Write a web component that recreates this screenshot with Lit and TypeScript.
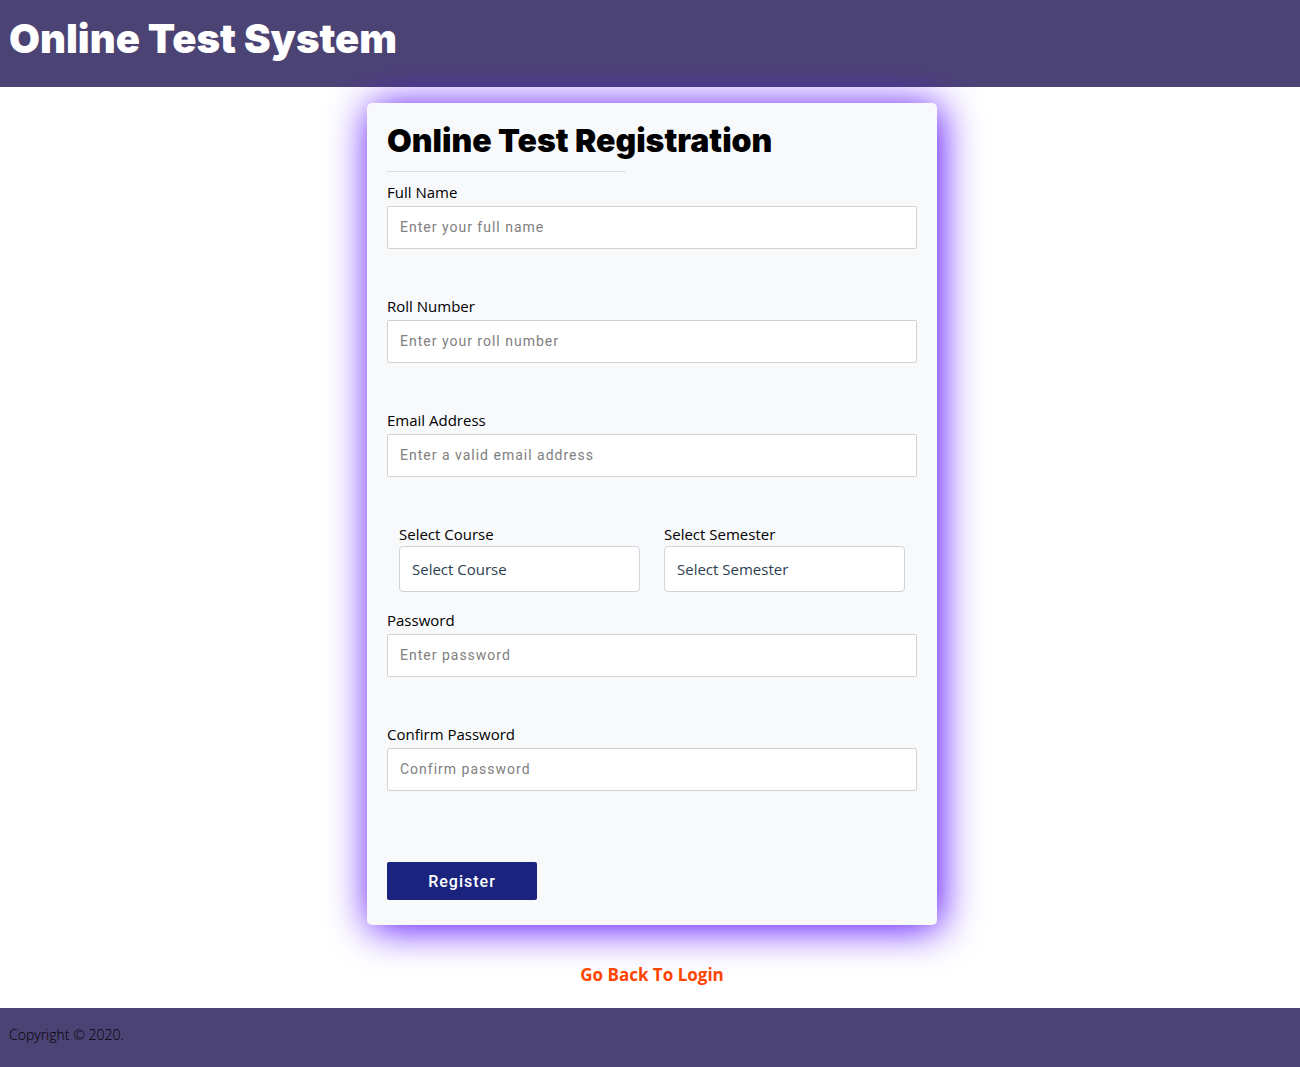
import { LitElement, html, css } from "lit";
import { customElement } from "lit/decorators.js";

interface Field {
  id: string;
  label: string;
  type: string;
  placeholder: string;
}

const identityFields: Field[] = [
  { id: "name", label: "Full Name", type: "text", placeholder: "Enter your full name" },
  { id: "roll", label: "Roll Number", type: "text", placeholder: "Enter your roll number" },
  { id: "email", label: "Email Address", type: "email", placeholder: "Enter a valid email address" },
];

const passwordFields: Field[] = [
  { id: "password", label: "Password", type: "password", placeholder: "Enter password" },
  { id: "confirm", label: "Confirm Password", type: "password", placeholder: "Confirm password" },
];

const choices = [
  { id: "course", label: "Select Course" },
  { id: "semester", label: "Select Semester" },
];

@customElement("app-root")
export class AppRoot extends LitElement {
  static styles = css`
    :host {
      display: flex;
      flex-direction: column;
      min-height: 100vh;
      background: #fff;
      color: #000;
      font: 15px/24px "Open Sans", "Noto Sans", sans-serif;
    }
    * {
      box-sizing: border-box;
    }
    .header {
      background: #4c4375;
      padding: 15px 9px 24px;
    }
    .title,
    .heading {
      margin: 0;
      font-family: Inter, sans-serif;
      font-weight: 900;
    }
    .title {
      color: #fff;
      font-size: 40px;
      line-height: 48px;
    }
    .main {
      flex: 1;
      display: flex;
      flex-direction: column;
      align-items: center;
      padding: 16px 0 21px 4px;
    }
    .card {
      width: 100%;
      max-width: 570px;
      padding: 20px 20px 25px;
      background: #f8f9fb;
      border-radius: 5px;
      box-shadow: 3px 3px 40px #5000ff;
    }
    .heading {
      font-size: 32px;
      line-height: 36px;
    }
    .rule {
      width: 45%;
      height: 1px;
      margin: 12px 0 8px;
      border: 0;
      background: #dbdcde;
    }
    .field {
      display: flex;
      flex-direction: column;
      gap: 2px;
      margin-bottom: 45px;
    }
    .input {
      width: 100%;
      height: 43px;
      padding: 0 12px 2px;
      border: 1px solid #d2d2d2;
      border-radius: 2px;
      background: #fff;
      color: #2c3e50;
      font: 14px Roboto, sans-serif;
      letter-spacing: 1px;
    }
    .input::placeholder {
      color: #808080;
      opacity: 1;
    }
    .choices {
      display: grid;
      grid-template-columns: 1fr 1fr;
      gap: 24px;
      padding: 0 12px;
      margin-bottom: 16px;
    }
    .choice {
      display: flex;
      flex-direction: column;
    }
    .select {
      appearance: none;
      height: 46px;
      padding: 0 12px;
      border: 1px solid #ced4da;
      border-radius: 4px;
      background: #fff;
      color: #2c3e50;
      font: inherit;
    }
    .register {
      display: block;
      width: 150px;
      height: 38px;
      margin-top: 71px;
      border: 0;
      border-radius: 2px;
      background: #1a237e;
      color: #fff;
      font: 500 16px Roboto, sans-serif;
      letter-spacing: 1px;
    }
    .field:last-of-type {
      margin-bottom: 0;
    }
    .back {
      margin-top: 38px;
      color: #ff4500;
      font-size: 17px;
      font-weight: 700;
      text-decoration: none;
    }
    .footer {
      background: #4c4375;
      padding: 15px 9px 20px;
      font-size: 14px;
      font-weight: 300;
    }
    .copyright {
      margin: 0;
    }
  `;

  private field(f: Field) {
    return html`<div class="field">
      <label class="label" for=${f.id}>${f.label}</label>
      <input class="input" id=${f.id} type=${f.type} placeholder=${f.placeholder} />
    </div>`;
  }

  render() {
    return html`
      <header class="header"><h1 class="title">Online Test System</h1></header>
      <main class="main">
        <form class="card">
          <h2 class="heading">Online Test Registration</h2>
          <hr class="rule" />
          ${identityFields.map((f) => this.field(f))}
          <div class="choices">
            ${choices.map(
              (c) => html`<div class="choice">
                <label class="label" for=${c.id}>${c.label}</label>
                <select class="select" id=${c.id}>
                  <option>${c.label}</option>
                </select>
              </div>`
            )}
          </div>
          ${passwordFields.map((f) => this.field(f))}
          <button class="register" type="submit">Register</button>
        </form>
        <a class="back" href="#login">Go Back To Login</a>
      </main>
      <footer class="footer"><p class="copyright">Copyright © 2020.</p></footer>
    `;
  }
}
